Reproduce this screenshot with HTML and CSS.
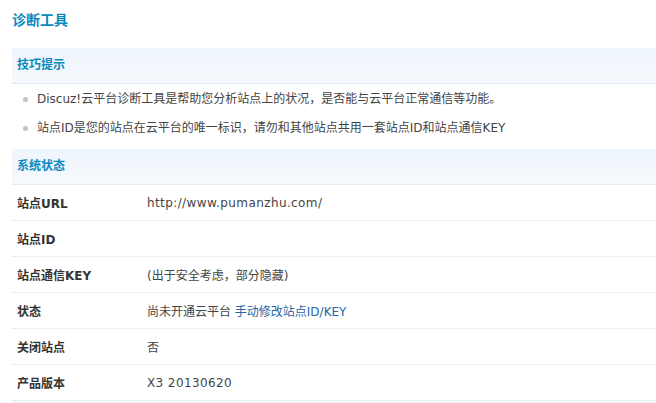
FILE: index.html
```html
<!DOCTYPE html>
<html lang="zh">
<head>
<meta charset="utf-8">
<title>诊断工具</title>
<link rel="stylesheet" href="styles.css">
</head>
<body>
<div class="page">
  <h3 class="title">诊断工具</h3>
  <div class="section-head">技巧提示</div>
  <ul class="tips">
    <li>Discuz!云平台诊断工具是帮助您分析站点上的状况，是否能与云平台正常通信等功能。</li>
    <li>站点ID是您的站点在云平台的唯一标识，请勿和其他站点共用一套站点ID和站点通信KEY</li>
  </ul>
  <div class="section-head">系统状态</div>
  <div class="rows">
    <div class="row"><span class="label">站点URL</span><span class="value en">http://www.pumanzhu.com/</span></div>
    <div class="row"><span class="label">站点ID</span><span class="value"></span></div>
    <div class="row"><span class="label">站点通信KEY</span><span class="value">(出于安全考虑，部分隐藏)</span></div>
    <div class="row"><span class="label">状态</span><span class="value">尚未开通云平台 <a class="link" href="#">手动修改站点ID/KEY</a></span></div>
    <div class="row"><span class="label">关闭站点</span><span class="value">否</span></div>
    <div class="row"><span class="label">产品版本</span><span class="value en">X3 20130620</span></div>
  </div>
  <div class="section-head tail"></div>
</div>
</body>
</html>
```
FILE: styles.css
```css
html, body {
  margin: 0;
  padding: 0;
  background: #fff;
}
body {
  font-family: "DejaVu Sans", Verdana, "Noto Sans CJK SC", sans-serif;
  font-size: 12px;
  color: #333;
  overflow: hidden;
}
.page {
  margin-left: 12px;
}
.title {
  margin: 0;
  height: 48px;
  padding-top: 10px;
  box-sizing: border-box;
  line-height: 20px;
  font-size: 14px;
  font-weight: bold;
  color: #0a8ac0;
}
.section-head {
  height: 35px;
  line-height: 35px;
  padding-left: 5px;
  background: linear-gradient(#eef5fc, #f6f9fd);
  border-bottom: 1px dotted #dde3ea;
  color: #0a8ac0;
  font-weight: bold;
}
.section-head.tail {
  border-bottom: none;
}
.tips {
  list-style: none;
  margin: 0;
  padding: 1px 0 6px 0;
}
.tips li {
  position: relative;
  height: 29px;
  line-height: 29px;
  padding-left: 25px;
  color: #444;
  white-space: nowrap;
}
.tips li::before {
  content: "";
  position: absolute;
  left: 11px;
  top: 12px;
  width: 5px;
  height: 5px;
  border-radius: 50%;
  background: #c4c4c4;
}
.rows {
  display: flex;
  flex-direction: column;
}
.row {
  display: flex;
  align-items: center;
  height: 35px;
  border-bottom: 1px dotted #e2e2e2;
  white-space: nowrap;
}
.label {
  width: 130px;
  padding-left: 5px;
  font-weight: bold;
  color: #333;
}
.value {
  color: #444;
}
.value.en {
  letter-spacing: 0.4px;
}
.link {
  color: #2366a8;
  text-decoration: none;
}
```
